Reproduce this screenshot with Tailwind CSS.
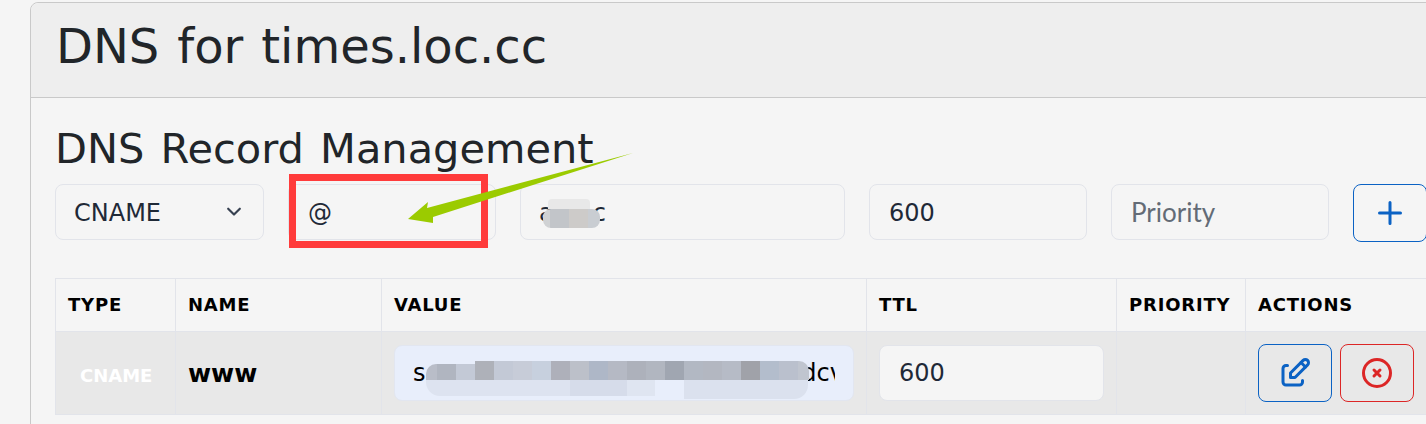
<!DOCTYPE html>
<html lang="en">
<head>
    <meta charset="UTF-8">
    <meta name="viewport" content="width=device-width, initial-scale=1.0">
    <title>DNS for times.loc.cc</title>
    <script src="https://cdn.jsdelivr.net/npm/@tailwindcss/browser@4"></script>
</head>
<body class="bg-[#f5f5f5] font-['DejaVu_Sans',sans-serif] text-[#1f2937]">
<div class="relative h-[424px] w-[1426px] overflow-hidden pl-[30px] pt-[2px]">
    <!-- card runs off the right and bottom of the shot -->
    <div class="w-[1500px] rounded-tl-lg border border-[#c9c9c9] bg-[#f5f5f5] h-[500px]">
        <div class="flex h-[95px] items-center rounded-tl-lg border-b border-[#c9c9c9] bg-[#eeeeee] pl-[25px] pb-[8px]">
            <h1 class="text-[48px] leading-none text-[#212529] [word-spacing:2.7px]">DNS for times.loc.cc</h1>
        </div>
        <div class="pl-[24px] pt-[27px]">
            <h2 class="h-[59px] text-[41.5px] leading-[48px] text-[#212529] [word-spacing:3px]">DNS Record Management</h2>
            <div class="flex items-start gap-6 text-[24px]">
                <div class="flex h-[56px] w-[209px] items-center justify-between rounded-lg border border-[#e2e4ea] pl-[18px] pr-[19px]">
                    <span class="pt-[2px]">CNAME</span>
                    <svg class="h-5 w-5 text-[#374151]" viewBox="0 0 24 24" fill="none" stroke="currentColor" stroke-width="2.6" stroke-linecap="round" stroke-linejoin="round"><path d="M5 8l7 7l7 -7"/></svg>
                </div>
                <div class="flex h-[56px] w-[208px] items-center rounded-lg border border-[#e2e4ea] pl-[19px] pt-[2px]">@</div>
                <div class="flex h-[56px] w-[325px] items-center gap-[39px] rounded-lg border border-[#e2e4ea] pl-[18px] pt-[2px]"><span>a</span><span>c</span></div>
                <div class="flex h-[56px] w-[218px] items-center rounded-lg border border-[#e2e4ea] pl-[19px] pt-[2px]">600</div>
                <div class="flex h-[56px] w-[218px] items-center rounded-lg border border-[#e2e4ea] pl-[19px] font-['Lato',sans-serif] text-[26px] text-[#636b76]">Priority</div>
                <button class="flex h-[58px] w-[74px] items-center justify-center rounded-lg border border-[#0b62c4] text-[#0b62c4]">
                    <svg class="h-9 w-9" viewBox="0 0 24 24" fill="none" stroke="currentColor" stroke-width="2" stroke-linecap="round" stroke-linejoin="round"><path d="M12 5v14M5 12h14"/></svg>
                </button>
            </div>
            <table class="mt-[36px] w-[1371px] table-fixed border-collapse text-left">
                <colgroup>
                    <col class="w-[120px]"><col class="w-[206px]"><col class="w-[485px]"><col class="w-[250px]"><col class="w-[129px]"><col class="w-[181px]">
                </colgroup>
                <thead>
                    <tr class="h-[53px] text-[18px] font-bold uppercase tracking-[0.8px] text-black">
                        <th class="border border-[#e2e4ea] pl-3 pb-[2px]">Type</th>
                        <th class="border border-[#e2e4ea] pl-3 pb-[2px]">Name</th>
                        <th class="border border-[#e2e4ea] pl-3 pb-[2px]">Value</th>
                        <th class="border border-[#e2e4ea] pl-3 pb-[2px]">TTL</th>
                        <th class="border border-[#e2e4ea] pl-3 pb-[2px]">Priority</th>
                        <th class="border border-[#e2e4ea] pl-3 pb-[2px]">Actions</th>
                    </tr>
                </thead>
                <tbody>
                    <tr class="h-[83px] bg-[#e8e8e8]">
                        <td class="border border-[#e2e4ea] pl-[24px] pt-[4px] text-[18px] font-bold text-white">CNAME</td>
                        <td class="border border-[#e2e4ea] pl-3 pt-[2px] text-[25px] font-bold text-black">www</td>
                        <td class="border border-[#e2e4ea] px-3">
                            <div class="flex h-[56px] items-center rounded-lg border border-[#e2e6f0] bg-[#e8eefb] px-[18px] text-[24px] text-black">
                                <div class="flex w-full justify-between overflow-hidden whitespace-nowrap"><span>s</span><span class="-mr-[9px]">dcv</span></div>
                            </div>
                        </td>
                        <td class="border border-[#e2e4ea] px-3">
                            <div class="flex h-[56px] items-center rounded-lg border border-[#e2e4ea] bg-[#f5f5f5] pl-[19px] text-[24px] text-[#1f2937]">600</div>
                        </td>
                        <td class="border border-[#e2e4ea]"></td>
                        <td class="border border-[#e2e4ea] pl-3">
                            <div class="flex gap-2">
                                <button class="flex h-[58px] w-[74px] items-center justify-center rounded-lg border border-[#0b62c4] text-[#0b62c4]">
                                    <svg class="h-9 w-9" viewBox="0 0 24 24" fill="none" stroke="currentColor" stroke-width="2" stroke-linecap="round" stroke-linejoin="round"><path d="M7 7h-1a2 2 0 0 0 -2 2v9a2 2 0 0 0 2 2h9a2 2 0 0 0 2 -2v-1"/><path d="M20.385 6.585a2.1 2.1 0 0 0 -2.97 -2.97l-8.415 8.385v3h3l8.385 -8.415"/><path d="M16 5l3 3"/></svg>
                                </button>
                                <button class="flex h-[58px] w-[74px] items-center justify-center rounded-lg border border-[#dc2626] text-[#dc2626]">
                                    <svg class="h-9 w-9" viewBox="0 0 24 24" fill="none" stroke="currentColor" stroke-width="2" stroke-linecap="round" stroke-linejoin="round"><circle cx="12" cy="12" r="9"/><path d="M10 10l4 4m0 -4l-4 4"/></svg>
                                </button>
                            </div>
                        </td>
                    </tr>
                </tbody>
            </table>
        </div>
    </div>

    <!-- screenshot annotations: redaction mosaics, red box, green arrow -->
    <div class="absolute left-[548px] top-[199px] h-[10px] w-[42px] rounded-t-sm bg-[#e8e8e8]"></div>
    <div class="absolute left-[543px] top-[209px] flex h-[19px] overflow-hidden rounded-[8px]">
        <div class="w-[7px] bg-[#d0d2d4]"></div><div class="w-[19px] bg-[#c2c5c9]"></div><div class="w-[19px] bg-[#cdcbc9]"></div><div class="w-[12px] bg-[#c9cdd2]"></div>
    </div>

    <div class="absolute left-[426px] top-[380px] flex h-[16px] w-[229px] overflow-hidden rounded-bl-[14px]">
        <div class="w-[144px] bg-[#dde3f0]"></div><div class="w-[57px] bg-[#d6dcea]"></div><div class="w-[28px] bg-[#dfe5f1]"></div>
    </div>
    <div class="absolute left-[684px] top-[380px] h-[19px] w-[124px] rounded-br-[14px] bg-[#dbe1ee]"></div>
    <div class="absolute left-[426px] top-[364px] flex h-[16px]">
        <div class="w-[11px] rounded-tl-[10px] bg-[#b9bdc8]"></div><div class="w-[19px] bg-[#b0b5c0]"></div><div class="w-[19px] bg-[#c3c9d6]"></div>
    </div>
    <div class="absolute left-[475px] top-[361px] flex h-[19px]">
        <div class="w-[19px] bg-[#aeb1b9]"></div><div class="w-[19px] bg-[#c3c9d6]"></div><div class="w-[19px] bg-[#c7ccd8]"></div><div class="w-[19px] bg-[#c7d0de]"></div><div class="w-[19px] bg-[#aeb0ba]"></div><div class="w-[19px] bg-[#bcc0c9]"></div><div class="w-[19px] bg-[#aeb7c7]"></div><div class="w-[19px] bg-[#b5b9c4]"></div><div class="w-[19px] bg-[#adb1bb]"></div><div class="w-[19px] bg-[#b1b6c0]"></div><div class="w-[19px] bg-[#a0a6b1]"></div><div class="w-[19px] bg-[#b2b8c3]"></div><div class="w-[19px] bg-[#b3b7c1]"></div><div class="w-[19px] bg-[#b6bbc6]"></div><div class="w-[19px] bg-[#a0a2a9]"></div><div class="w-[19px] bg-[#b3bdcc]"></div><div class="w-[19px] bg-[#bac0cd]"></div><div class="w-[11px] rounded-tr-[10px] bg-[#c0c5cf]"></div>
    </div>
    <div class="absolute left-[289px] top-[174px] h-[74px] w-[199px] border-[7px] border-[#ff3b3b]"></div>
    <svg class="absolute left-0 top-0 h-[424px] w-[1426px]" viewBox="0 0 1426 424">
        <polygon fill="#9bcb00" points="408,219 428,202 427,208 633,153 433,217 433,223"/>
    </svg>
</div>
</body>
</html>
